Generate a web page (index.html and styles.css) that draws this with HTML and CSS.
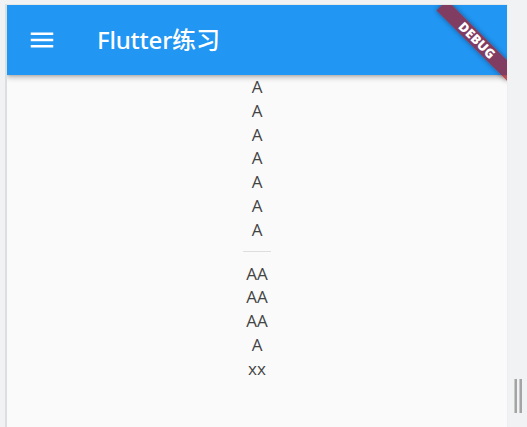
FILE: index.html
```html
<!DOCTYPE html>
<html lang="zh">
<head>
<meta charset="utf-8">
<title>Flutter练习</title>
<link rel="stylesheet" href="styles.css">
</head>
<body>
<div class="screen">
  <div class="frame">
    <header class="appbar">
      <div class="leading">
        <svg class="menu" width="30" height="30" viewBox="0 0 24 24"><path d="M3 18h18v-2H3v2zm0-5h18v-2H3v2zm0-7v2h18V6H3z" fill="#fff"/></svg>
      </div>
      <h1 class="title">Flutter练习</h1>
    </header>
    <main class="body">
      <div class="col">
        <span class="t">A</span>
        <span class="t">A</span>
        <span class="t">A</span>
        <span class="t">A</span>
        <span class="t">A</span>
        <span class="t">A</span>
        <span class="t">A</span>
        <div class="divider"></div>
        <span class="t">AA</span>
        <span class="t">AA</span>
        <span class="t">AA</span>
        <span class="t">A</span>
        <span class="t">xx</span>
      </div>
    </main>
    <div class="banner"><span>DEBUG</span></div>
  </div>
  <aside class="side">
    <div class="grip"><i></i><i></i></div>
  </aside>
</div>
</body>
</html>
```
FILE: styles.css
```css
html, body {
  margin: 0;
  padding: 0;
  height: 100%;
}
body {
  background: #f1f2f3;
  overflow: hidden;
}
.screen {
  display: flex;
  height: 427px;
  padding-top: 4px;
  padding-left: 5px;
  box-sizing: border-box;
}
.frame {
  position: relative;
  width: 500px;
  flex: none;
  border-left: 2px solid #dcdfdf;
  border-top: 1px solid #e6e8e8;
  background: #fafafa;
  overflow: hidden;
  display: flex;
  flex-direction: column;
}
.appbar {
  height: 70px;
  flex: none;
  background: #2196f3;
  display: flex;
  align-items: center;
  box-shadow: 0 3px 5px rgba(0,0,0,0.22), 0 1px 2px rgba(0,0,0,0.12);
  position: relative;
  z-index: 1;
}
.leading {
  width: 70px;
  height: 70px;
  display: flex;
  align-items: center;
  justify-content: center;
}
.menu { display: block; }
.title {
  margin: 0 0 0 20px;
  color: #fff;
  font-family: "Noto Sans", "Noto Sans CJK SC", sans-serif;
  font-weight: 500;
  font-size: 24px;
  line-height: 30px;
  letter-spacing: -0.2px;
}
.body {
  flex: 1;
  display: flex;
  justify-content: center;
}
.col {
  display: flex;
  flex-direction: column;
  align-items: center;
}
.t {
  font-family: "Open Sans", "Noto Sans", sans-serif;
  font-size: 17px;
  line-height: 23.8px;
  height: 23.8px;
  color: #444;
}
.divider {
  width: 28px;
  height: 1px;
  background: #dedede;
  margin: 9.5px 0 9.5px;
}
.banner {
  position: absolute;
  z-index: 2;
  top: 0;
  right: 0;
  width: 100px;
  height: 15px;
  transform-origin: 50% 50%;
  transform: translate(20px, 28px) rotate(45deg);
  background: rgba(165, 25, 40, 0.72);
  box-shadow: 0 0 5px rgba(0,0,0,0.4);
  display: flex;
  align-items: center;
  justify-content: center;
}
.banner span {
  color: #fff;
  font-family: "Noto Sans", "DejaVu Sans", sans-serif;
  font-weight: 900;
  font-size: 13px;
  line-height: 15px;
  letter-spacing: 0.2px;
}
.side {
  flex: 1;
  display: flex;
  align-items: flex-end;
  background: #f0f2f4;
  border-left: 1px solid #eceeef;
}
.grip {
  display: flex;
  gap: 2px;
  margin: 0 0 14px 6px;
}
.grip i {
  display: block;
  width: 3px;
  height: 34px;
  background: #a4a4a4;
  border-left: 1px solid #c8c8c8;
  box-sizing: border-box;
}
```
